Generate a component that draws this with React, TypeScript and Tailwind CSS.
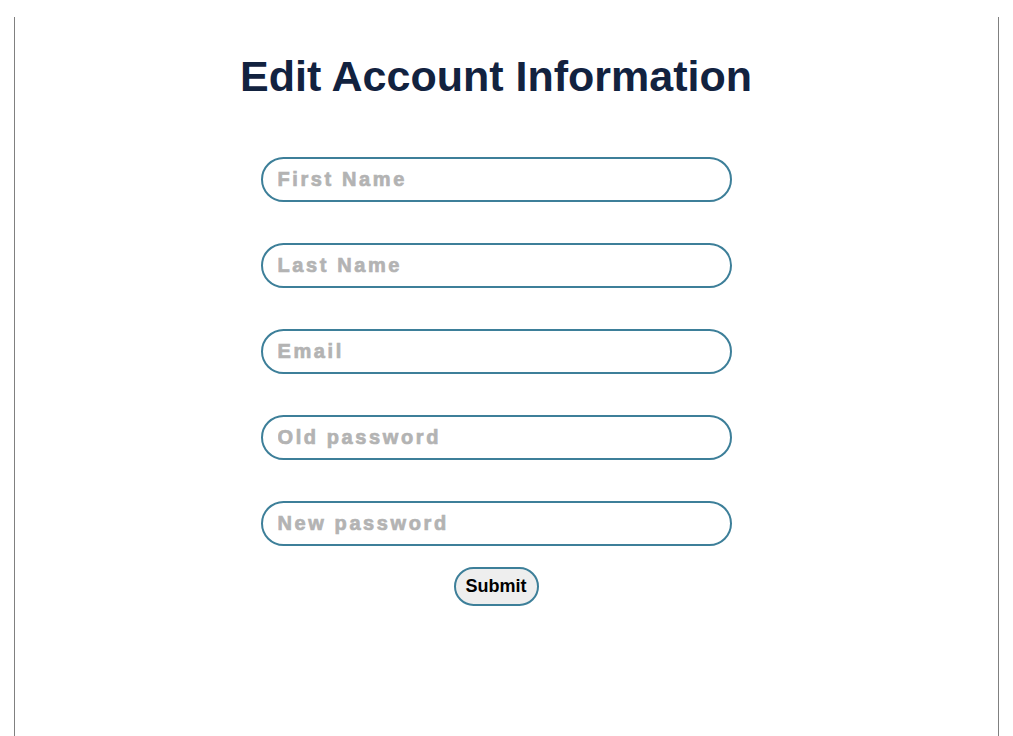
import { useState } from 'react'

const fields = ['First Name', 'Last Name', 'Email', 'Old password', 'New password']

export default function App() {
  const [values, setValues] = useState<Record<string, string>>({})

  return (
    <div className="min-h-screen bg-white pt-[17px] font-['Liberation_Sans',Arial,sans-serif]">
      <div className="mx-[14px] h-[719px] border-x border-[#808080]">
        <div className="flex flex-col items-center pr-[21px]">
          <h1 className="mt-[34px] text-[43px] leading-[50px] font-bold text-[#12223f]">
            Edit Account Information
          </h1>
          <form
            className="mt-[56px] flex flex-col items-center"
            onSubmit={(e) => e.preventDefault()}
          >
            <div className="flex flex-col gap-[41px]">
              {fields.map((f) => (
                <input
                  key={f}
                  type={f.includes('password') ? 'password' : 'text'}
                  placeholder={f}
                  value={values[f] ?? ''}
                  onChange={(e) => setValues({ ...values, [f]: e.target.value })}
                  className="h-[45px] w-[471px] rounded-full border-2 border-[#3d7f99] px-[15px] text-[20px] font-bold tracking-[2.6px] text-[#333] outline-none placeholder:text-[#b3b3b3] placeholder:[-webkit-text-stroke:0.7px_#b3b3b3]"
                />
              ))}
            </div>
            <button
              type="submit"
              className="mt-[21px] h-[39px] rounded-full border-2 border-[#3d7f99] bg-[#eeeeee] px-[10px] text-[18px] font-bold text-black"
            >
              Submit
            </button>
          </form>
        </div>
      </div>
    </div>
  )
}
